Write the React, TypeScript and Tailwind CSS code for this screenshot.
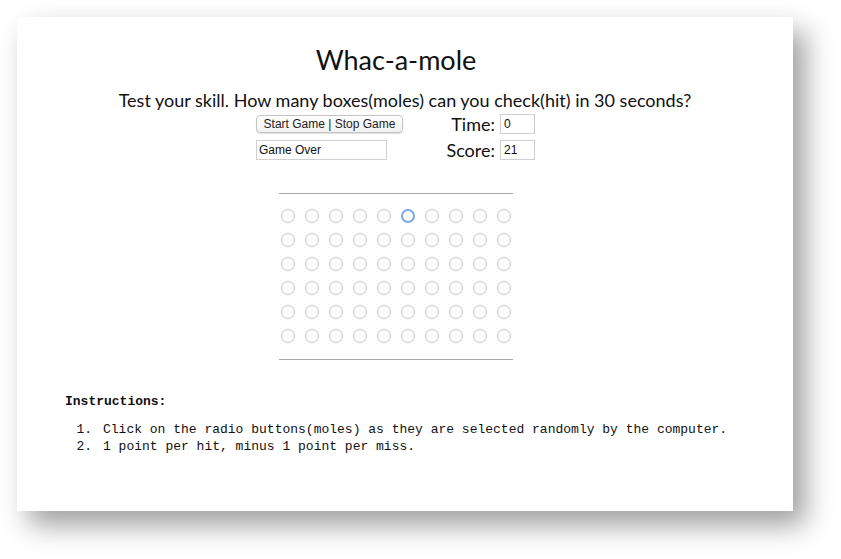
import React from "react";

const rows = 6;
const cols = 10;

export default function App() {
  const gothic = { fontFamily: '"Lato", "Noto Sans", sans-serif' };
  return (
    <div className="w-[841px] h-[559px] bg-white pt-[17px] pl-[17px] overflow-hidden">
      <div className="w-[776px] h-[494px] bg-white shadow-[12px_14px_26px_rgba(0,0,0,0.38)] flex flex-col">
        <h1
          className="text-center text-[27px] leading-[30px] text-[#111] mt-[28px] pr-[18px]"
          style={gothic}
        >
          Whac-a-mole
        </h1>
        <p
          className="text-center text-[18px] leading-[22px] text-[#111] mt-[14px]"
          style={gothic}
        >
          Test your skill. How many boxes(moles) can you check(hit) in 30 seconds?
        </p>
        <div className="ml-[239px] mt-[3px] flex flex-col gap-[6px]">
          <div className="flex items-center h-[20px]">
            <button
              className="w-[147px] h-[18px] rounded-[4px] border border-[#c4c4c4] bg-gradient-to-b from-white to-[#f1f1f1] text-[12px] leading-[16px] text-[#222] shadow-[0_1px_1px_rgba(0,0,0,0.12)]"
              style={{ fontFamily: '"Liberation Sans", Arial, sans-serif' }}
            >
              Start Game | Stop Game
            </button>
            <span
              className="ml-[40px] w-[52px] text-right text-[18px] leading-[20px] text-[#111]"
              style={gothic}
            >
              Time:
            </span>
            <div
              className="ml-[5px] w-[35px] h-[20px] border border-[#d0d0d0] text-[12px] leading-[18px] pl-[3px] text-[#111]"
              style={{ fontFamily: '"Liberation Sans", Arial, sans-serif' }}
            >
              0
            </div>
          </div>
          <div className="flex items-center h-[20px]">
            <div
              className="w-[131px] h-[20px] border border-[#d0d0d0] text-[12px] leading-[18px] pl-[2px] text-[#111]"
              style={{ fontFamily: '"Liberation Sans", Arial, sans-serif' }}
            >
              Game Over
            </div>
            <span
              className="ml-[56px] w-[52px] text-right text-[18px] leading-[20px] text-[#111]"
              style={gothic}
            >
              Score:
            </span>
            <div
              className="ml-[5px] w-[35px] h-[20px] border border-[#d0d0d0] text-[12px] leading-[18px] pl-[3px] text-[#111]"
              style={{ fontFamily: '"Liberation Sans", Arial, sans-serif' }}
            >
              21
            </div>
          </div>
        </div>
        <div className="ml-[262px] mt-[33px] w-[234px]">
          <div className="h-px bg-[#a8a8a8]" />
          <div className="pt-[15px] pb-[16px] pl-[2px] grid grid-cols-[repeat(10,24px)] gap-y-[10px]">
            {Array.from({ length: rows * cols }).map((_, i) => {
              const sel = i === 5;
              return (
                <div
                  key={i}
                  className={
                    sel
                      ? "w-[14px] h-[14px] rounded-full border-2 border-[#7aa9e6] bg-white"
                      : "w-[14px] h-[14px] rounded-full border border-[#c6c6c6] bg-white"
                  }
                />
              );
            })}
          </div>
          <div className="h-px bg-[#a8a8a8]" />
        </div>
        <div
          className="ml-[48px] mt-[34px] text-[13px] text-[#111]"
          style={{ fontFamily: '"Liberation Mono", "Courier New", monospace' }}
        >
          <div className="font-bold leading-[16px]">Instructions:</div>
          <ol className="mt-[11px] leading-[17px]">
            <li className="flex">
              <span className="w-[38px] text-right pr-[11px] shrink-0">1.</span>
              <span>Click on the radio buttons(moles) as they are selected randomly by the computer.</span>
            </li>
            <li className="flex">
              <span className="w-[38px] text-right pr-[11px] shrink-0">2.</span>
              <span>1 point per hit, minus 1 point per miss.</span>
            </li>
          </ol>
        </div>
      </div>
    </div>
  );
}
